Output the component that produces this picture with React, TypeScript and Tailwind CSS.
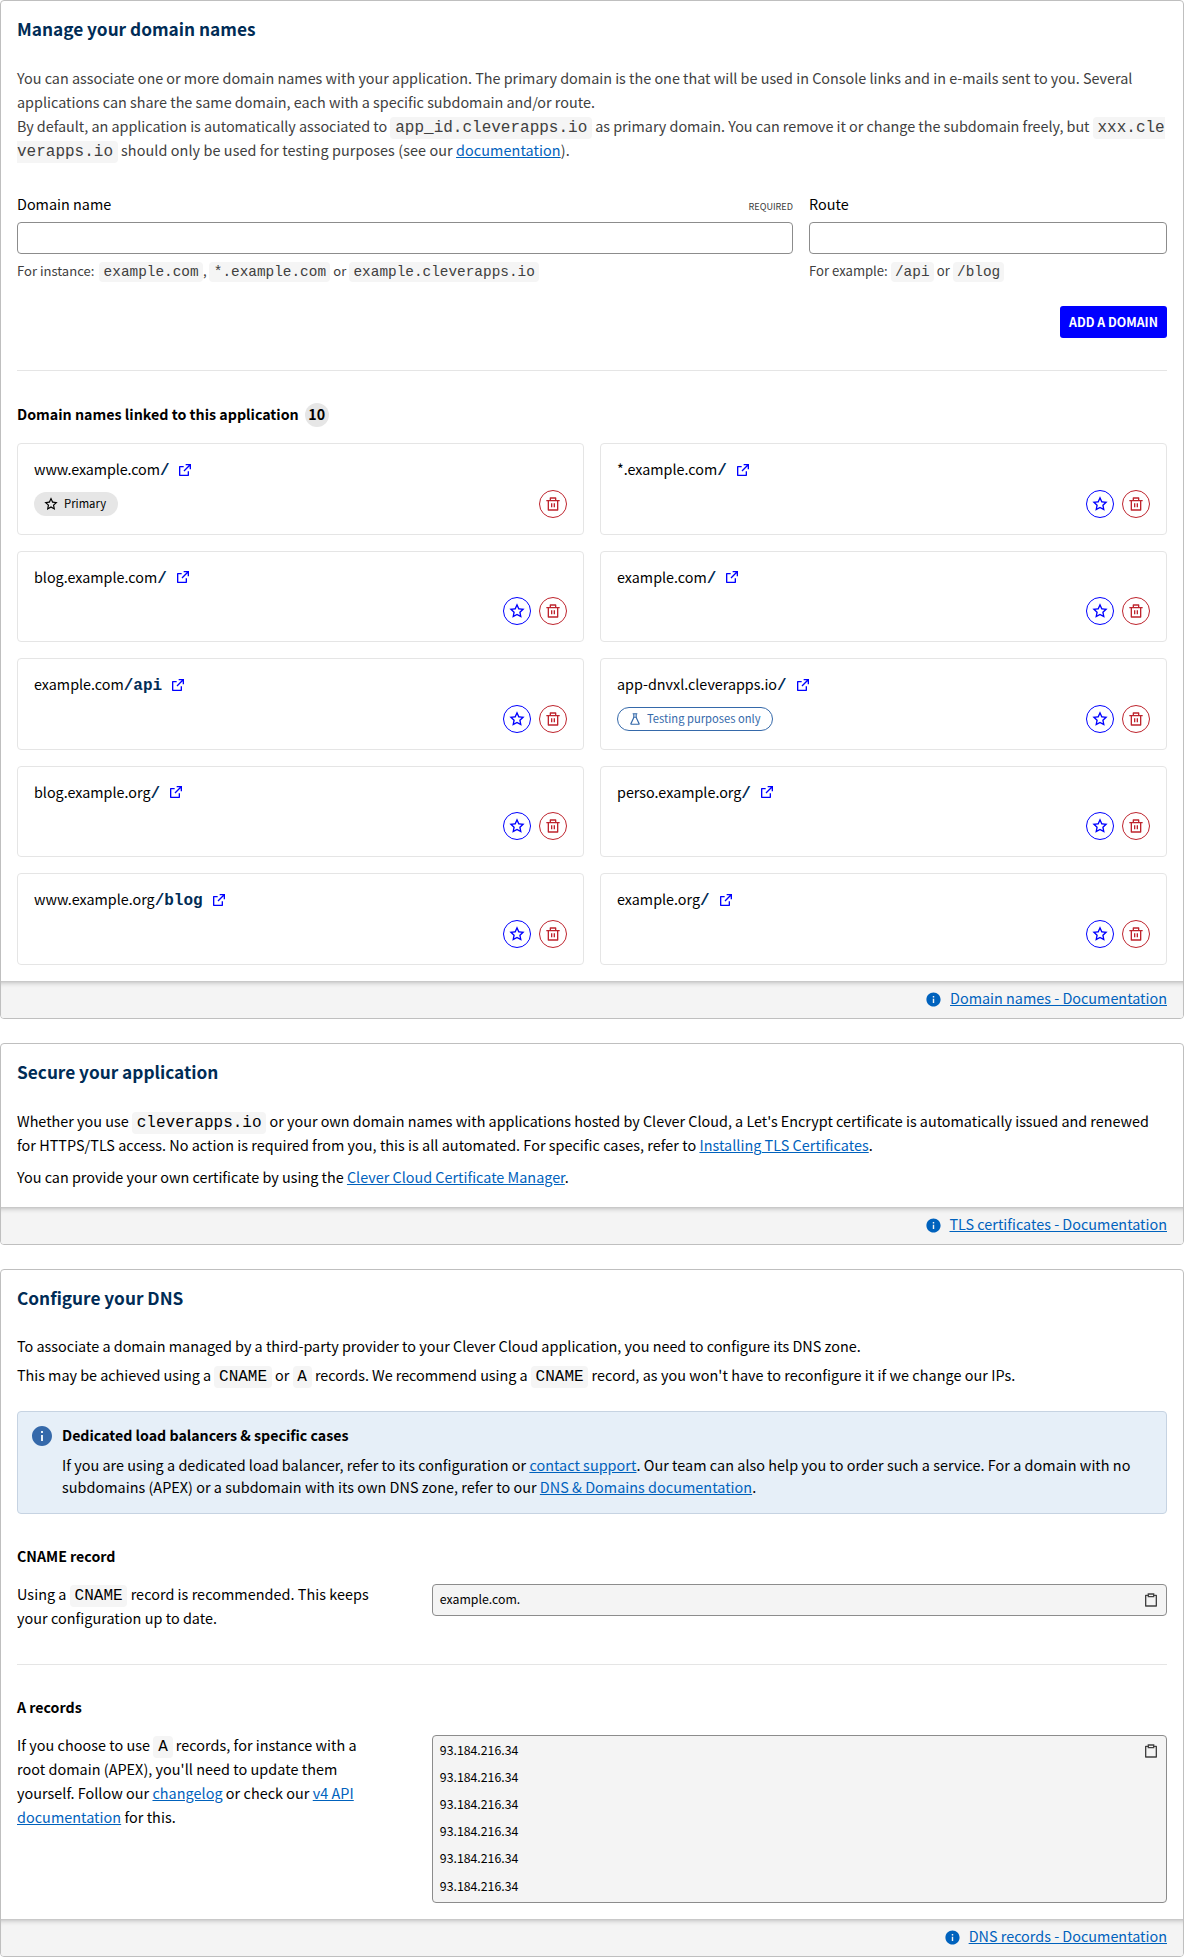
import type { ReactNode } from 'react';
import {
  RiClipboardLine,
  RiDeleteBinLine,
  RiExternalLinkLine,
  RiFlaskLine,
  RiInformationFill,
  RiStarLine,
} from 'react-icons/ri';

function Code({ children, small = false }: { children: ReactNode; small?: boolean }) {
  return (
    <code
      className={`break-all rounded bg-[#f5f5f5] font-['Liberation_Mono',monospace] leading-none tracking-normal ${
        small ? 'px-[4.3px] py-[2px] text-[14.4px]' : 'px-[4.8px] py-[2px] text-[16px]'
      }`}
    >
      {children}
    </code>
  );
}

function Link({ children }: { children: ReactNode }) {
  return (
    <a href="#" className="text-[#0062bd] underline">
      {children}
    </a>
  );
}

function Panel({ title, doc, children, className }: { title: string; doc: string; children: ReactNode; className: string }) {
  return (
    <section className={`flex flex-col overflow-hidden rounded-[4px] border border-[#bfbfbf] bg-white ${className}`}>
      <div className="grow px-4 pt-4">
        <h2 className="text-[17.25px] leading-6 font-bold text-[#002c56]">{title}</h2>
        {children}
      </div>
      <footer className="flex h-[37px] shrink-0 items-center justify-end gap-2 bg-[#f4f4f4] px-4 pb-1 shadow-[inset_0_6px_6px_-6px_rgba(0,0,0,0.4)]">
        <RiInformationFill className="mt-1 size-[17px] text-[#0062bd]" />
        <Link>{doc}</Link>
      </footer>
    </section>
  );
}

type Domain = { host: string; path?: string; kind?: 'primary' | 'testing' };

const domains: Domain[] = [
  { host: 'www.example.com', kind: 'primary' },
  { host: '*.example.com' },
  { host: 'blog.example.com' },
  { host: 'example.com' },
  { host: 'example.com', path: 'api' },
  { host: 'app-dnvxl.cleverapps.io', kind: 'testing' },
  { host: 'blog.example.org' },
  { host: 'perso.example.org' },
  { host: 'www.example.org', path: 'blog' },
  { host: 'example.org' },
];

function DomainCard({ host, path = '', kind }: Domain) {
  return (
    <li className="flex h-[91.5px] flex-col rounded-[4px] border border-[#e5e5e5] px-4 pt-[13.5px]">
      <div className="flex h-6 items-center">
        <div className={`flex items-baseline pb-px text-[14.33px] ${kind === 'primary' ? 'tracking-[-0.1px]' : ''}`}>
          <span>{host}</span>
          <span className="font-['Liberation_Mono',monospace] text-[16px] leading-4 font-bold text-[#002c56]">/{path}</span>
        </div>
        <RiExternalLinkLine className="ml-2 size-4 text-[#0000ff]" />
      </div>
      <div className="mt-2 flex h-7 items-center gap-2">
        {kind === 'primary' && (
          <span className="flex h-6 items-center gap-1.5 rounded-full bg-[#e6e6e6] pr-3 pl-2.5 text-[11.3px]">
            <RiStarLine className="size-3.5" />
            <span className="pb-0.5">Primary</span>
          </span>
        )}
        {kind === 'testing' && (
          <span className="flex h-6 items-center gap-[5px] rounded-full border border-[#3569aa] pr-[11px] pl-2.5 text-[11.2px] text-[#3569aa]">
            <RiFlaskLine className="size-3.5" />
            <span className="pb-0.5">Testing purposes only</span>
          </span>
        )}
        <span className="grow" />
        {kind !== 'primary' && (
          <button className="grid size-7 place-items-center rounded-full border border-[#0000ff] text-[#0000ff]">
            <RiStarLine className="size-4" />
          </button>
        )}
        <button className="grid size-7 place-items-center rounded-full border border-[#be242d] text-[#be242d]">
          <RiDeleteBinLine className="size-4" />
        </button>
      </div>
    </li>
  );
}

function CopyBox({ lines }: { lines: string[] }) {
  return (
    <div className="mt-[1.5px] flex items-start justify-between rounded-[4px] border border-[#8c8c8c] bg-[#f4f4f4] pr-[7px] pl-[6.5px] text-[12.3px]">
      <div className="pt-px pb-[1.8px]">
        {lines.map((l, i) => (
          <div key={i} className="leading-[27.2px]">
            {l}
          </div>
        ))}
      </div>
      <RiClipboardLine className="mt-[7px] size-4 text-[#404040]" />
    </div>
  );
}

export default function App() {
  return (
    <main className="flex flex-col bg-white font-['Noto_Sans_CJK_SC',sans-serif] text-[14.4px] leading-6 text-black">
      <Panel title="Manage your domain names" doc="Domain names - Documentation" className="h-[1019px]">
        <div className="mt-[25px] h-24 text-[14.38px] text-[#404040]">
          You can associate one or more domain names with your application. The primary domain is the one that will be used in
          Console links and in e-mails sent to you. Several applications can share the same domain, each with a specific
          subdomain and/or route.
          <br />
          <span className="tracking-[-0.03px]">
            By default, an application is automatically associated to <Code>app_id.cleverapps.io</Code> as primary domain. You
            can remove it or change the subdomain freely, but <Code>xxx.cleverapps.io</Code>{' '}
          </span>
          <span className="tracking-[0.09px]">
            should only be used for testing purposes (see our <Link>documentation</Link>).
          </span>
        </div>
        <form className="mt-[30px] flex gap-4">
          <div className="w-[776px]">
            <div className="flex h-6 items-baseline justify-between">
              <label>Domain name</label>
              <span className="text-[9.1px] text-[#404040]">REQUIRED</span>
            </div>
            <input className="mt-1.5 block h-8 w-full rounded-[4px] border border-[#8c8c8c]" />
            <p className="mt-[5px] h-[23px] text-[13.05px] text-[#404040]">
              <span className="mr-[2px]">For instance:</span> <Code small>example.com</Code>, <Code small>*.example.com</Code> or{' '}
              <Code small>example.cleverapps.io</Code>
            </p>
          </div>
          <div className="flex-1">
            <label className="block h-6">Route</label>
            <input className="mt-1.5 block h-8 w-full rounded-[4px] border border-[#8c8c8c]" />
            <p className="mt-[5px] h-[23px] text-[13.1px] text-[#404040]">
              For example: <Code small>/api</Code> or <Code small>/blog</Code>
            </p>
          </div>
        </form>
        <div className="mt-6 flex justify-end">
          <button className="flex h-8 w-[107px] items-center justify-center rounded-[3px] bg-[#0000ff] text-[12.3px] font-bold text-white">
            ADD A DOMAIN
          </button>
        </div>
        <hr className="mt-8 border-[#e5e5e5]" />
        <h3 className="mt-8 flex h-6 items-start gap-1.5 text-[14.25px] leading-[21px] font-bold">
          <span>Domain names linked to this application</span>
          <span className="h-6 rounded-full bg-[#e6e6e6] px-[3.5px]">10</span>
        </h3>
        <ul className="mt-4 grid grid-cols-2 gap-4">
          {domains.map((d, i) => (
            <DomainCard key={i} {...d} />
          ))}
        </ul>
      </Panel>

      <Panel title="Secure your application" doc="TLS certificates - Documentation" className="mt-6 h-[202px]">
        <p className="mt-[25px]">
          Whether you use <Code>cleverapps.io</Code>
          <span className="text-[14.37px]">
            {' '}
            or your own domain names with applications hosted by Clever Cloud, a Let's Encrypt certificate is automatically issued
            and renewed{' '}
          </span>
          <span className="tracking-[0.03px]">
            for HTTPS/TLS access. No action is required from you, this is all automated. For specific cases, refer to{' '}
            <Link>Installing TLS Certificates</Link>.
          </span>
        </p>
        <p className="mt-2">
          You can provide your own certificate by using the <Link>Clever Cloud Certificate Manager</Link>.
        </p>
      </Panel>

      <Panel title="Configure your DNS" doc="DNS records - Documentation" className="mt-6 h-[688px]">
        <p className="mt-6">
          To associate a domain managed by a third-party provider to your Clever Cloud application, you need to configure its DNS
          zone.
        </p>
        <p className="mt-[5px] h-6">
          <span className="tracking-[-0.03px]">
            This may be achieved using a <Code>CNAME</Code> or <Code>A</Code> records. We recommend using a{' '}
            <Code>CNAME</Code>{' '}
          </span>
          <span className="tracking-[0.05px]">record, as you won't have to reconfigure it if we change our IPs.</span>
        </p>
        <div className="mt-6 flex h-[103px] gap-2 rounded-[4px] border border-[#c6d3e2] bg-[#e6eff8] px-3 pt-[11px]">
          <RiInformationFill className="mt-px size-6 shrink-0 text-[#3569aa]" />
          <div>
            <h3 className="text-[14.2px] font-bold">Dedicated load balancers &amp; specific cases</h3>
            <p className="mt-[7px] leading-[22px] tracking-[0.03px]">
              If you are using a dedicated load balancer, refer to its configuration or <Link>contact support</Link>. Our team can
              also help you to order such a service. For a domain with no subdomains (APEX) or a subdomain with its own DNS zone,
              refer to our <Link>DNS &amp; Domains documentation</Link>.
            </p>
          </div>
        </div>
        <h3 className="mt-[30px] text-[14.2px] font-bold">CNAME record</h3>
        <div className="mt-[14px] grid h-12 grid-cols-[1fr_2fr] items-start gap-12">
          <p className="tracking-[0.04px]">
            Using a <Code>CNAME</Code> record is recommended. This keeps your configuration up to date.
          </p>
          <CopyBox lines={['example.com.']} />
        </div>
        <hr className="mt-[34px] border-[#e5e5e5]" />
        <h3 className="mt-[30px] text-[14.2px] font-bold">A records</h3>
        <div className="mt-[14px] grid grid-cols-[1fr_2fr] items-start gap-12">
          <p className="tracking-[0.04px]">
            If you choose to use <Code>A</Code> records, for instance with a root domain (APEX), you'll need to update them
            yourself. Follow our <Link>changelog</Link> or check our <Link>v4 API documentation</Link> for this.
          </p>
          <CopyBox lines={Array(6).fill('93.184.216.34')} />
        </div>
      </Panel>
    </main>
  );
}
